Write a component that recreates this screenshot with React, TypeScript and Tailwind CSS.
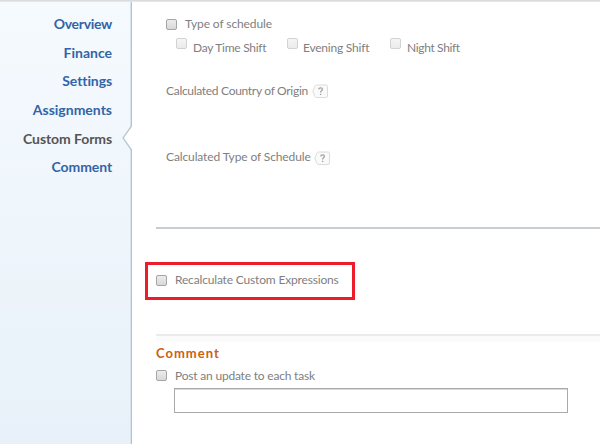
import React from "react";

const navItems = [
  { label: "Overview", tracking: "tracking-[-0.3px]" },
  { label: "Finance", tracking: "tracking-[0px]" },
  { label: "Settings", tracking: "tracking-[-0.1px]" },
  { label: "Assignments", tracking: "tracking-[0px]" },
  { label: "Custom Forms", tracking: "tracking-[-0.08px]", active: true },
  { label: "Comment", tracking: "tracking-[-0.1px]" },
];

function Checkbox({ disabled = false }: { disabled?: boolean }) {
  return (
    <span
      role="checkbox"
      aria-checked={false}
      aria-disabled={disabled}
      className={`block size-[11px] shrink-0 rounded-[2px] border bg-gradient-to-b ${
        disabled
          ? "border-[#d2d2d2] from-[#f5f5f5] to-[#ebebeb]"
          : "border-[#a5a5a5] from-[#ececec] to-[#d8d8d8]"
      }`}
    />
  );
}

function HelpTag() {
  return (
    <svg width="17" height="15" viewBox="0 0 17 15" fill="none" className="shrink-0">
      <path
        d="M4.5 1H14Q15.5 1 15.5 2.5V12Q15.5 13.5 14 13.5H4.5Q3.5 13.5 3 12.5L0.8 7.3L3 2Q3.5 1 4.5 1Z"
        fill="#fafafa"
        stroke="#dcdcdc"
      />
      <path
        d="M6.7 5.4Q6.8 3.8 8.6 3.8Q10.4 3.8 10.4 5.3Q10.4 6.2 9.5 6.8Q8.6 7.4 8.6 8.5M8.6 9.7V11"
        stroke="#a0a0a0"
        strokeWidth="1.3"
      />
    </svg>
  );
}

export default function App() {
  return (
    <div className="flex h-[444px] w-[600px] flex-col overflow-hidden bg-white font-[Lato,'Open_Sans',sans-serif] text-[12px] text-[#808080]">
      <div className="h-[2px] shrink-0 border-b border-[#e6e6e6] bg-[#dcdcdc]" />
      <div className="flex min-h-0 flex-1">
        <nav className="relative w-[132px] shrink-0 border-r border-[#b4c3ce] bg-gradient-to-b from-[#f5fafe] to-[#e8f1f9] pt-[7.5px] pr-[19px] shadow-[inset_-1px_0_#d7e4ee]">
          {navItems.map((item) => (
            <a
              key={item.label}
              className={`flex h-[28.6px] items-center justify-end text-[14px] font-bold whitespace-nowrap ${item.tracking} ${
                item.active ? "text-[#555555]" : "text-[#3264a8]"
              }`}
            >
              {item.label}
            </a>
          ))}
          <svg className="absolute top-[123px] -right-px" width="10" height="26" viewBox="0 0 10 26">
            <path d="M10 1L1 13L10 25Z" fill="#fff" />
            <path d="M9.5 1L1 13L9.5 25" fill="none" stroke="#b9c8d2" strokeWidth="1.3" />
          </svg>
        </nav>

        <main className="flex min-w-0 flex-1 flex-col whitespace-nowrap">
          <section className="ml-6 flex h-[227px] shrink-0 flex-col border-b-2 border-[#c8cdd2] pl-[10px]">
            <div className="mt-[12px] flex h-5 items-center gap-[8px]">
              <Checkbox />
              <span className="tracking-[-0.1px]">Type of schedule</span>
            </div>
            <div className="mt-[2px] ml-[10px] flex h-6">
              <div className="flex w-[111px] gap-[6px]">
                <span className="pt-[2px]"><Checkbox disabled /></span>
                <span className="pt-[3px] tracking-[-0.27px]">Day Time Shift</span>
              </div>
              <div className="flex w-[103px] gap-[5px]">
                <span className="pt-[2px]"><Checkbox disabled /></span>
                <span className="pt-[3px] tracking-[-0.22px]">Evening Shift</span>
              </div>
              <div className="flex gap-[6px]">
                <span className="pt-[2px]"><Checkbox disabled /></span>
                <span className="pt-[3px] tracking-[-0.35px]">Night Shift</span>
              </div>
            </div>
            <div className="mt-[21px] flex h-5 items-center gap-1">
              <span className="w-[142px] tracking-[-0.3px]">Calculated Country of Origin</span>
              <HelpTag />
            </div>
            <div className="mt-[46px] flex h-5 items-center gap-1">
              <span className="w-[144px] tracking-[-0.12px]">Calculated Type of Schedule</span>
              <span className="pt-[2px]"><HelpTag /></span>
            </div>
          </section>

          <section className="mt-[33px] ml-[13px] flex h-[38px] w-[210px] shrink-0 items-center gap-[8px] border-3 border-[#ec1c2b] pb-[2px] pl-[8px]">
            <Checkbox />
            <span className="tracking-[-0.17px]">Recalculate Custom Expressions</span>
          </section>

          <section className="mt-[34px] ml-6 border-t-2 border-[#ebebeb]">
            <div className="h-[6px] bg-[#fbfbfb]" />
            <h2 className="mt-[2px] h-[18px] text-[13px] leading-[18px] font-bold tracking-[1px] text-[#cc6110]">
              Comment
            </h2>
            <div className="mt-[3px] flex h-5 items-center gap-[8px]">
              <Checkbox />
              <span className="pt-px tracking-[-0.2px]">Post an update to each task</span>
            </div>
            <input
              type="text"
              className="mt-[3px] ml-[18px] block h-[25px] w-[394px] border border-[#aaaaaa] bg-white shadow-[inset_0_1px_#d9d9d9] outline-none"
            />
          </section>
        </main>
      </div>
    </div>
  );
}
